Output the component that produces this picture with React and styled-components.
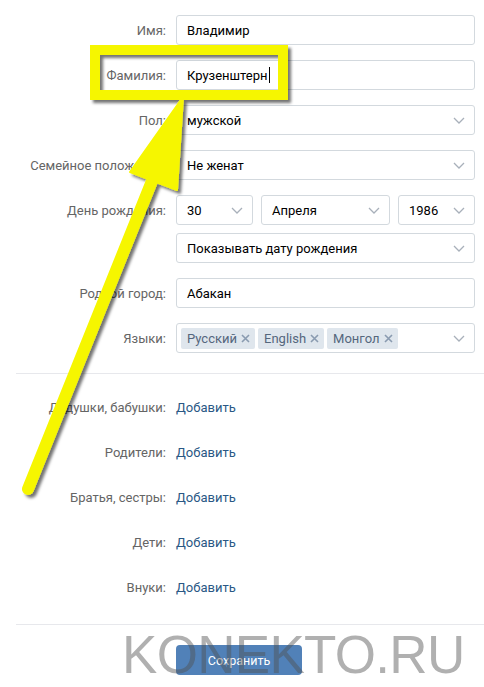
import React from 'react';
import styled, { createGlobalStyle } from 'styled-components';

const GlobalStyle = createGlobalStyle`
  body {
    margin: 0;
    background: #fff;
    font-family: Roboto, "Liberation Sans", Arial, sans-serif;
  }
`;

const Page = styled.div`
  position: relative;
  width: 484px;
  height: 687px;
  overflow: hidden;
  background: #fff;
`;

const Form = styled.div`
  padding: 15px 9px 0 16px;
`;

const Row = styled.div`
  display: grid;
  grid-template-columns: 150px 1fr;
  column-gap: 10px;
  align-items: center;
  min-height: 30px;
  margin-bottom: ${(p) => (p.$tight ? '8px' : '15px')};
`;

const Label = styled.div`
  text-align: right;
  font-size: 13px;
  color: #656565;
  white-space: nowrap;
`;

const Field = styled.div`
  box-sizing: border-box;
  height: 30px;
  border: 1px solid #d3d9de;
  border-radius: 3px;
  padding: 0 9px 0 ${(p) => (p.$tags ? '4px' : '10px')};
  display: flex;
  align-items: center;
  justify-content: space-between;
  font-size: 13px;
  color: #000;
  background: #fff;
`;

const Value = styled.span`
  display: flex;
  align-items: center;
  gap: ${(p) => (p.$gap ? '3px' : '0')};
`;

const Cursor = styled.span`
  display: inline-block;
  width: 1px;
  height: 16px;
  margin-left: 1px;
  background: #000;
`;

const DateGrid = styled.div`
  display: grid;
  grid-template-columns: 77px 1fr 77px;
  gap: 8px;
`;

const Tag = styled.span`
  display: inline-flex;
  align-items: center;
  gap: 4px;
  height: 21px;
  padding: 0 5px 0 6px;
  border-radius: 2px;
  background: #dfe6ed;
  color: #55677d;
  font-size: 13px;
`;

const Divider = styled.div`
  height: 1px;
  background: #e7e8ec;
  margin: ${(p) => p.$margin};
  margin-right: -9px;
`;

const AddLink = styled.a`
  font-size: 13px;
  color: #2a5885;
  text-decoration: none;
`;

const SaveButton = styled.button`
  margin-left: 160px;
  width: 126px;
  height: 30px;
  border: none;
  border-radius: 4px;
  background: #5181b8;
  color: #fff;
  font-family: Roboto, "Liberation Sans", Arial, sans-serif;
  font-size: 12.5px;
`;

const Overlay = styled.svg`
  position: absolute;
  left: 0;
  top: 0;
  pointer-events: none;
`;

const Watermark = styled.div`
  position: absolute;
  left: 122px;
  top: 628px;
  font-family: "Liberation Sans", Arial, sans-serif;
  font-size: 53px;
  line-height: 1;
  letter-spacing: -0.7px;
  color: rgba(80, 80, 80, 0.45);
  pointer-events: none;
  white-space: nowrap;
`;

const Chevron = () => (
  <svg width="12" height="7" viewBox="0 0 12 7">
    <path d="M1 1l5 5 5-5" fill="none" stroke="#a8b0ba" strokeWidth="1.3" />
  </svg>
);

const Cross = () => (
  <svg width="9" height="9" viewBox="0 0 9 9">
    <path d="M1 1l7 7M8 1l-7 7" stroke="#8a9bb0" strokeWidth="1.6" />
  </svg>
);

const Select = ({ value }) => (
  <Field>
    <Value>{value}</Value>
    <Chevron />
  </Field>
);

const relatives = ['Дедушки, бабушки:', 'Родители:', 'Братья, сестры:', 'Дети:', 'Внуки:'];
const languages = ['Русский', 'English', 'Монгол'];

const App = () => {
  return (
    <Page>
      <GlobalStyle />
      <Form>
        <Row>
          <Label>Имя:</Label>
          <Field><Value>Владимир</Value></Field>
        </Row>
        <Row>
          <Label>Фамилия:</Label>
          <Field><Value>Крузенштерн<Cursor /></Value></Field>
        </Row>
        <Row>
          <Label>Пол:</Label>
          <Select value="мужской" />
        </Row>
        <Row>
          <Label>Семейное положение:</Label>
          <Select value="Не женат" />
        </Row>
        <Row $tight>
          <Label>День рождения:</Label>
          <DateGrid>
            <Select value="30" />
            <Select value="Апреля" />
            <Select value="1986" />
          </DateGrid>
        </Row>
        <Row>
          <span />
          <Select value="Показывать дату рождения" />
        </Row>
        <Row>
          <Label>Родной город:</Label>
          <Field><Value>Абакан</Value></Field>
        </Row>
        <Row>
          <Label>Языки:</Label>
          <Field $tags>
            <Value $gap>
              {languages.map((l) => (
                <Tag key={l}>{l}<Cross /></Tag>
              ))}
            </Value>
            <Chevron />
          </Field>
        </Row>
        <Divider $margin="20px 0 18px" />
        {relatives.map((r) => (
          <Row key={r}>
            <Label>{r}</Label>
            <AddLink href="#">Добавить</AddLink>
          </Row>
        ))}
        <Divider $margin="22px 0 20px" />
        <SaveButton>Сохранить</SaveButton>
      </Form>

      <Overlay width="484" height="687" viewBox="0 0 484 687">
        <defs>
          <filter id="shadow" x="-20%" y="-20%" width="140%" height="140%">
            <feDropShadow dx="3" dy="3" stdDeviation="1.5" floodColor="#000" floodOpacity="0.55" />
          </filter>
        </defs>
        <g filter="url(#shadow)" fill="#f6f600" stroke="#f6f600">
          <rect x="95" y="50" width="188" height="45" fill="none" strokeWidth="10" />
          <line x1="154" y1="176" x2="28" y2="489" strokeWidth="12" strokeLinecap="round" />
          <polygon points="183,97 130,172 177,190" strokeWidth="2" strokeLinejoin="round" />
        </g>
      </Overlay>
      <Watermark>KONEKTO.RU</Watermark>
    </Page>
  );
};

export default App;
